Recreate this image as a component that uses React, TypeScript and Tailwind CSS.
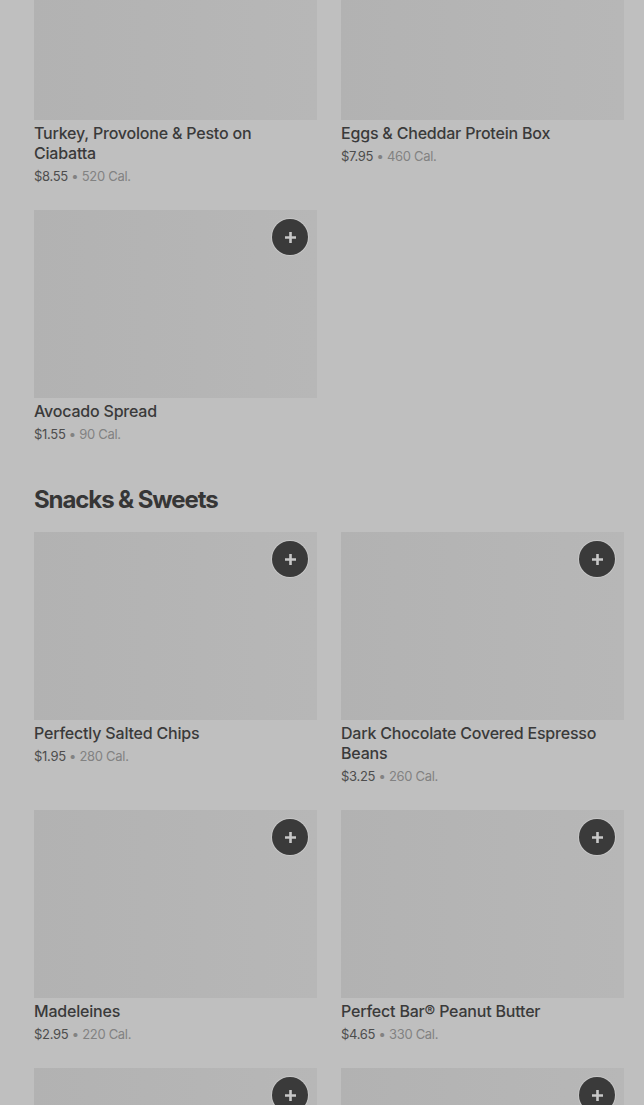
import React from 'react';

type Item = {
  name: string;
  price: string;
  cal: string;
  add?: boolean;
};

const sandwiches: Item[] = [
  { name: 'Turkey, Provolone & Pesto on Ciabatta', price: '$8.55', cal: '520 Cal.' },
  { name: 'Eggs & Cheddar Protein Box', price: '$7.95', cal: '460 Cal.' },
  { name: 'Avocado Spread', price: '$1.55', cal: '90 Cal.', add: true },
];

const snacks: Item[] = [
  { name: 'Perfectly Salted Chips', price: '$1.95', cal: '280 Cal.', add: true },
  { name: 'Dark Chocolate Covered Espresso Beans', price: '$3.25', cal: '260 Cal.', add: true },
  { name: 'Madeleines', price: '$2.95', cal: '220 Cal.', add: true },
  { name: 'Perfect Bar® Peanut Butter', price: '$4.65', cal: '330 Cal.', add: true },
  { name: '', price: '', cal: '', add: true },
  { name: '', price: '', cal: '', add: true },
];

function AddButton() {
  return (
    <button className="absolute top-[9px] right-[9px] flex h-9 w-9 items-center justify-center rounded-full bg-[#3a3a3a] shadow-[0_0_0_1px_rgba(210,210,210,0.6)]">
      <svg width="13" height="13" viewBox="0 0 13 13" fill="none">
        <path d="M6.5 1v11M1 6.5h11" stroke="#c8c8c8" strokeWidth="2.6" />
      </svg>
    </button>
  );
}

function Card({ item }: { item: Item }) {
  return (
    <div className="flex flex-col">
      <div className="relative h-[188px] w-full bg-gradient-to-r from-[#b2b2b2] to-[#b7b7b7]">
        {item.add && <AddButton />}
      </div>
      {item.name && (
        <div className="mt-[3px]">
          <div className="text-[16px] leading-5 font-medium tracking-[-0.2px] text-[#3a3a3a]">{item.name}</div>
          <div className="mt-[3px] text-[13px] leading-5 tracking-[-0.3px] text-[#828282]">
            <span className="text-[#4d4d4d]">{item.price}</span> • {item.cal}
          </div>
        </div>
      )}
    </div>
  );
}

export default function App() {
  return (
    <div
      className="h-[1105px] overflow-hidden bg-[#bfbfbf] pl-[34px] pr-5"
      style={{ fontFamily: 'Inter, "Noto Sans", sans-serif' }}
    >
      <div className="-mt-[68px] grid grid-cols-2 gap-x-6 gap-y-6">
        {sandwiches.map((it, i) => (
          <Card key={i} item={it} />
        ))}
      </div>
      <h2 className="mt-[40px] mb-[16px] text-[24px] leading-8 font-bold tracking-[-1.1px] text-[#363636]">
        Snacks &amp; Sweets
      </h2>
      <div className="grid grid-cols-2 gap-x-6 gap-y-6">
        {snacks.map((it, i) => (
          <Card key={i} item={it} />
        ))}
      </div>
    </div>
  );
}
